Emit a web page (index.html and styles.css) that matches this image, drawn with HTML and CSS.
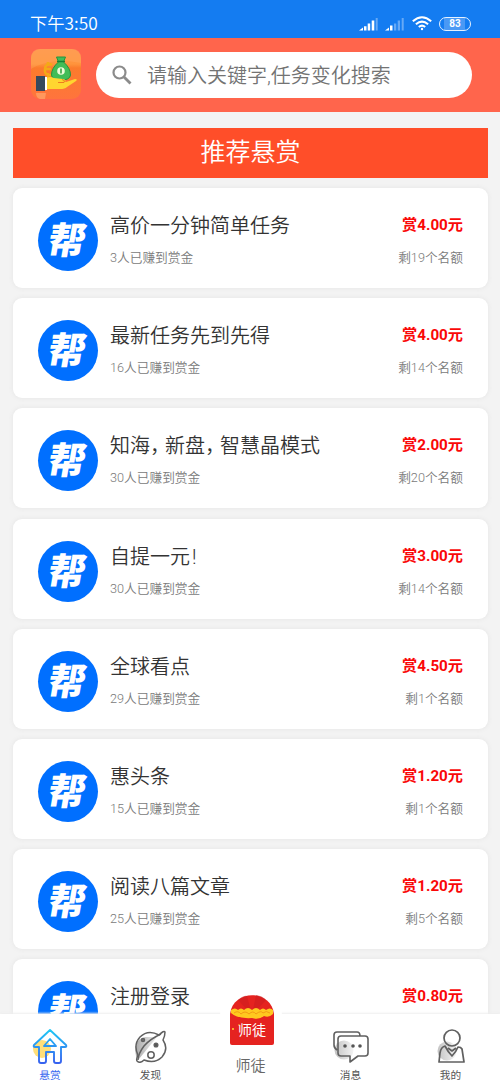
FILE: index.html
```html
<!DOCTYPE html>
<html lang="zh-CN">
<head>
<meta charset="utf-8">
<title>推荐悬赏</title>
<link rel="stylesheet" href="styles.css">
</head>
<body>
<div class="status">
  <span class="time">下午3:50</span>
  <svg class="signal" width="20" height="14" viewBox="0 0 20 14" fill="#fff"><path d="M0 13.500 4 10.500v3zM5 9.300h2.500v4.200H5zM8.700 6.500h2.500v7H8.700zM12.700 3.500h2.600v10h-2.600z"/><path opacity=".35" d="M16.700 1h2v12.500h-2z"/></svg>
  <svg class="signal second" width="20" height="14" viewBox="0 0 20 14" fill="#fff"><path d="M0 13.500 4 10.500v3zM5 8.500h2.500v5H5z"/><path opacity=".35" d="M9 6.500h2.300v7H9zM12.700 3.500h2.300v10h-2.300zM16.700 1h2v12.500h-2z"/></svg>
  <svg class="wifi" width="20" height="15" viewBox="0 0 20 15" fill="none" stroke="#fff" stroke-width="2"><path d="M.8 5.300Q10-2.700 19.200 5.300M3.900 8.300Q10 3 16.100 8.300M6.800 11.100Q10 8.200 13.200 11.100"/><circle cx="10" cy="13" r="1.200" fill="#fff" stroke="none"/></svg>
  <span class="battery">83</span>
</div>
<header class="header">
  <svg class="logo" width="50" height="50" viewBox="0 0 50 50">
    <defs><linearGradient id="app" x2="0" y2="1"><stop stop-color="#ff9448"/><stop offset=".3" stop-color="#ff943c"/><stop offset=".38" stop-color="#fb7b2c"/><stop offset="1" stop-color="#ff743d"/></linearGradient></defs>
    <rect width="50" height="50" rx="9" fill="url(#app)"/>
    <path d="M0 9Q0 0 9 0h32q9 0 9 9v5Q20 8 0 20z" fill="#ffb06a" opacity=".3"/>
    <path d="M21 16q-6-3-7 4t7 6M17 13v4M17 24v4M14 20h6" fill="none" stroke="#f4a916" stroke-width="2.500"/>
    <path d="M25.500 8h9l-2 5q7 6 7 13c0 7-19 7-19 0q0-7 7-13z" fill="#42bd58" stroke="#26943c"/>
    <path d="M26 12.500h8" stroke="#188034" stroke-width="1.500"/>
    <circle cx="30" cy="22" r="3.800" fill="#eefbd8"/><path d="M30 19.500v5" stroke="#36a546" stroke-width="1.600"/>
    <path d="M15 29q4-2 8 0l9 1q4 1 2 3h-5 6l9-3q3 0 1 2l-9 6q-2 2-7 2H15z" fill="#ffd630"/>
    <path d="M27 33.500h6q2-2-2-3" fill="none" stroke="#ee7d1d"/>
    <rect x="5" y="27" width="9" height="15" fill="#35495d"/><rect x="14" y="28" width="2" height="13" fill="#fff"/>
    <path d="M5 44h10l-1 6H9q-4-1-4-6" fill="#ffbc80" opacity=".5"/>
  </svg>
  <div class="search">
    <svg width="20" height="20" viewBox="0 0 20 20" fill="none" stroke="#8b8b8b"><circle cx="7.500" cy="7.500" r="6" stroke-width="2.200"/><path d="m12 12 6.500 6.500" stroke-width="2.800"/></svg>
    <span>请输入关键字,任务变化搜索</span>
  </div>
</header>
<main class="content">
  <h1 class="banner">推荐悬赏</h1>
  <div class="list">
    <article class="card"><div class="avatar"><span>帮</span></div><div class="info"><h2>高价一分钟简单任务</h2><p>3人已赚到赏金</p></div><div class="reward"><b>赏4.00元</b><p>剩19个名额</p></div></article>
    <article class="card"><div class="avatar"><span>帮</span></div><div class="info"><h2>最新任务先到先得</h2><p>16人已赚到赏金</p></div><div class="reward"><b>赏4.00元</b><p>剩14个名额</p></div></article>
    <article class="card"><div class="avatar"><span>帮</span></div><div class="info"><h2>知海<span class="comma">，</span>新盘<span class="comma">，</span>智慧晶模式</h2><p>30人已赚到赏金</p></div><div class="reward"><b>赏2.00元</b><p>剩20个名额</p></div></article>
    <article class="card"><div class="avatar"><span>帮</span></div><div class="info"><h2>自提一元<span class="bang">!</span></h2><p>30人已赚到赏金</p></div><div class="reward"><b>赏3.00元</b><p>剩14个名额</p></div></article>
    <article class="card"><div class="avatar"><span>帮</span></div><div class="info"><h2>全球看点</h2><p>29人已赚到赏金</p></div><div class="reward"><b>赏4.50元</b><p>剩1个名额</p></div></article>
    <article class="card"><div class="avatar"><span>帮</span></div><div class="info"><h2>惠头条</h2><p>15人已赚到赏金</p></div><div class="reward"><b>赏1.20元</b><p>剩1个名额</p></div></article>
    <article class="card"><div class="avatar"><span>帮</span></div><div class="info"><h2>阅读八篇文章</h2><p>25人已赚到赏金</p></div><div class="reward"><b>赏1.20元</b><p>剩5个名额</p></div></article>
    <article class="card"><div class="avatar"><span>帮</span></div><div class="info"><h2>注册登录</h2></div><div class="reward"><b>赏0.80元</b></div></article>
  </div>
</main>
<nav class="tabs">
  <a class="tab active">
    <svg width="36" height="37" viewBox="0 0 36 37" fill="none"><defs><linearGradient id="house" x2="0" y2="1"><stop stop-color="#20c8f5"/><stop offset="1" stop-color="#3762ef"/></linearGradient></defs><circle cx="10" cy="21" r="9" fill="#ffdf79"/><path d="M18 2 2 17q-1 2 1 2h4v14q0 2 2 2h3q2 0 2-2v-9h8v9q0 2 2 2h3q2 0 2-2V19h4q2 0 1-2zM18 11l6 7H12z" stroke="url(#house)" stroke-width="1.900" stroke-linejoin="round"/></svg>
    <span>悬赏</span>
  </a>
  <a class="tab">
    <svg width="36" height="37" viewBox="0 0 36 37" fill="none" stroke="#606060" stroke-width="1.500" stroke-linejoin="round"><defs><linearGradient id="shade"><stop stop-color="#aaa"/><stop offset="1" stop-color="#eee"/></linearGradient></defs><path d="M3 28Q0 12 12 9h12L6 31z" fill="url(#shade)" stroke="none"/><path d="M26 7Q31 2 32 4q0 4-2 8 6 9-1 17-7 7-18 3-4 4-7 1-1-2 1-6Q0 17 7 9q8-8 19-2z"/><path d="M28 6Q17 11 11 18 5 26 5 32"/><circle cx="18" cy="27" r="3.200"/><circle cx="23" cy="17" r="1.800" fill="#555"/><circle cx="10" cy="12" r="1.500" fill="#777"/></svg>
    <span>发现</span>
  </a>
  <a class="tab center">
    <i class="bubble"><svg class="packet" width="44" height="50" viewBox="0 0 44 50"><path d="M0 19C3-6 41-6 44 19v29q0 2-2 2H2q-2 0-2-2z" fill="#e52320"/><path d="M22 20 8 5q6-5 9-4zM22 20 26 0q7 1 10 5z" fill="#c91c1d" opacity=".5"/><path d="M1 15q4-3 7 0 3-3 6 0 4-4 8 0 4-4 8 0 3-3 6 0 4-3 7 0v4q-4 4-9 2-5 4-12 2Q8 24 1 18z" fill="#ffc91f"/><path d="M4 18q4-3 7 1 4-4 8 0 4-4 7 0 5-4 7-1 3-3 7 0" fill="none" stroke="#f39c13"/><circle cx="3" cy="34" r="1" fill="#ffd631"/><circle cx="9" cy="30" r=".8" fill="#ffd631"/></svg><b>师徒</b></i>
    <span>师徒</span>
  </a>
  <a class="tab">
    <svg width="36" height="37" viewBox="0 0 36 37" fill="none" stroke="#606060" stroke-width="1.600" stroke-linejoin="round"><circle cx="11" cy="22" r="9.500" fill="url(#shade)" stroke="none" opacity=".7"/><path d="M4 22q-3-2-3-5V7q0-3 3-3h20q3 0 3 4M8 8h24q3 0 3 3v14q0 3-3 3h-7l-8 6v-6H8q-3 0-3-3V11q0-3 3-3z"/><g fill="#555" stroke="none"><circle cx="12" cy="18" r="1.800"/><circle cx="20" cy="18" r="1.800"/><circle cx="27" cy="18" r="1.800"/></g></svg>
    <span>消息</span>
  </a>
  <a class="tab">
    <svg width="36" height="37" viewBox="0 0 36 37" fill="none" stroke="#606060" stroke-width="1.700" stroke-linejoin="round"><circle cx="14" cy="23" r="9.500" fill="url(#shade)" stroke="none" opacity=".7"/><circle cx="19" cy="10" r="8"/><path d="M12 18q-4 1-5 7L6 34h25l-2-13q-1-2-4-2-2 5-6 9-4-4-7-10zM15 20l4 3 4-3"/></svg>
    <span>我的</span>
  </a>
</nav>
</body>
</html>
```
FILE: styles.css
```css
* { box-sizing: border-box; }
body {
  margin: 0;
  height: 1083px;
  display: flex;
  flex-direction: column;
  overflow: hidden;
  background: #f3f3f3;
  font-family: Roboto, "Noto Sans CJK SC", sans-serif;
  color: #333;
}
h1, h2, p { margin: 0; font-weight: 350; }
.status {
  flex: none;
  height: 38px;
  padding: 9px 29px 0 30px;
  display: flex;
  align-items: center;
  background: #147cf1;
  color: #fff;
}
.time { font: 350 17.300px/26px "Noto Sans CJK SC", sans-serif; margin: -2px auto 0 0; }
.second { margin-left: 6px; }
.wifi { margin: 0 7px; }
.battery {
  width: 32px;
  height: 14px;
  border: 1.500px solid #e5f1ff;
  border-radius: 7px;
  background: linear-gradient(90deg, #147cf1 15%, #4a99f5 15%, #4a99f5 83%, #147cf1 83%);
  font: 700 10px/12px Roboto, sans-serif;
  text-align: center;
}
.header {
  flex: none;
  height: 74px;
  padding: 0 28px 0 31px;
  display: flex;
  align-items: center;
  gap: 15px;
  background: #ff654c;
}
.logo { flex: none; margin-top: -2px; }
.search {
  flex: 1;
  height: 46px;
  border-radius: 23px;
  padding-left: 16px;
  display: flex;
  align-items: center;
  gap: 15px;
  background: #fff;
  color: #737373;
  font-size: 20px;
  font-weight: 350;
}
.search span { margin-top: -2px; }
.content { flex: 1; min-height: 0; overflow: hidden; padding: 16px 12px 0 13px; }
.banner {
  height: 50px;
  background: #ff4e29;
  color: #fff;
  font-size: 25px;
  line-height: 49px;
  text-align: center;
}
.list { display: flex; flex-direction: column; gap: 10.200px; padding-top: 10px; }
.card {
  flex: none;
  height: 100px;
  padding: 22px 25px 0;
  display: flex;
  background: #fff;
  border-radius: 9px;
  box-shadow: 0 0 5px #e4e4e4;
}
.avatar {
  flex: none;
  width: 60px;
  height: 61px;
  padding-right: 2px;
  border-radius: 50%;
  background: #006fff;
  color: #fff;
  text-align: center;
  font: 900 37px/57px "Noto Sans CJK SC", sans-serif;
}
.avatar span { display: inline-block; transform: skewX(-10deg); }
.info { flex: 1; padding-left: 12px; }
.info h2 { padding-top: 1px; font-size: 20px; line-height: 30px; }
.comma { font-feature-settings: "halt"; margin-right: 5px; }
.bang { padding-left: 2px; }
.card p { margin-top: 8px; font-size: 12.700px; line-height: 20px; color: #7a7a7a; }
.card .info p { margin-top: 7px; }
.reward { text-align: right; }
.reward b { display: block; color: #fa0808; font-size: 15.200px; line-height: 30px; }
.tabs {
  position: relative;
  flex: none;
  height: 69px;
  display: grid;
  grid-template-columns: repeat(5, 1fr);
  background: #fff;
  box-shadow: 0 -1px 2px #eee;
}
.tab {
  padding: 14px 0 0 1px;
  display: flex;
  flex-direction: column;
  align-items: center;
  color: #555;
  font-size: 10.700px;
  line-height: 22px;
}
.tab > svg { flex: none; }
.active { color: #416cf0; padding-left: 0; }
.center { position: relative; padding-top: 41px; font-size: 15px; line-height: 22px; font-weight: 350; color: #666; }
.bubble {
  position: absolute;
  top: -30px;
  left: 20px;
  width: 62px;
  height: 62px;
  padding: 11px 9px 0 10px;
  border-radius: 50%;
  background: #fff;
  font-style: normal;
}
.bubble b {
  position: absolute;
  top: 36px;
  left: 1px;
  width: 100%;
  text-align: center;
  color: #fff;
  font-size: 14px;
  line-height: 20px;
  font-weight: 400;
}
```
